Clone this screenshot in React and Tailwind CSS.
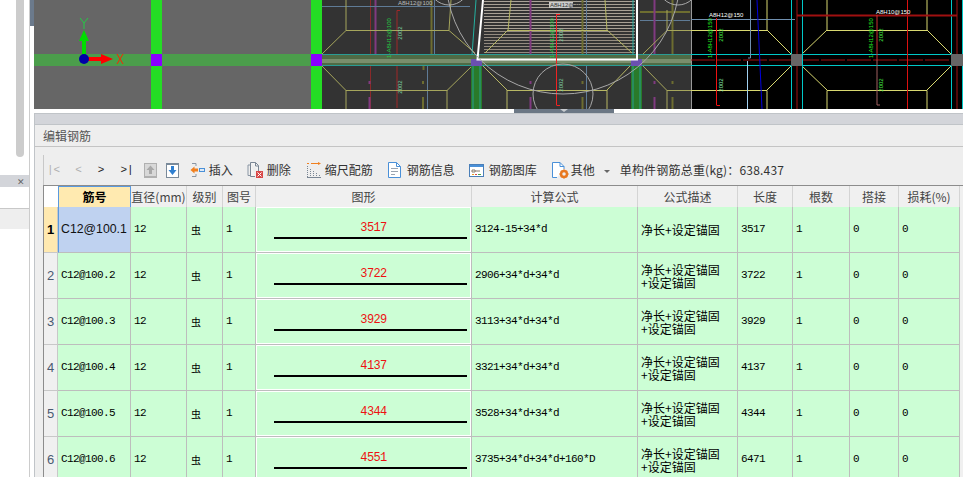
const SANS = '"Noto Sans CJK SC","Liberation Sans",sans-serif';
const MONO = '"Liberation Mono","Noto Sans CJK SC",monospace';

function L({ d, c, w = 1 }) {
  return <path d={d} stroke={c} strokeWidth={w} fill="none" />;
}
function VText({ x, y, t, c = "#22cc44", s = 6 }) {
  return (
    <text x={x} y={y} fill={c} fontSize={s} fontFamily='"Liberation Sans",sans-serif' transform={`rotate(-90 ${x} ${y})`} textAnchor="middle">
      {t}
    </text>
  );
}
function Canvas() {
  const hatch = [];
  for (let y = 1; y < 53; y += 3) hatch.push(<L key={y} d={`M484 ${y + 0.5}H635`} c={y < 30 ? "#a8a196" : "#948b80"} />);
  return (
    <svg width="929" height="109" viewBox="34 0 929 109" className="block">
      <rect x="34" y="0" width="288" height="109" fill="#666666" />
      <rect x="322" y="0" width="369" height="109" fill="#333333" />
      <rect x="691" y="0" width="272" height="109" fill="#000000" />

      <rect x="34" y="54" width="288" height="12" fill="#4b9d4b" />
      <rect x="151" y="0" width="11" height="109" fill="#24dd24" />
      <rect x="311" y="0" width="11" height="109" fill="#24dd24" />
      <rect x="151" y="54" width="11" height="12" fill="#8a00ff" />
      <rect x="311" y="54" width="11" height="12" fill="#8a00ff" />

      <rect x="82" y="40" width="4" height="16" fill="#00dd00" />
      <path d="M84 30L89 41H79Z" fill="#00dd00" />
      <rect x="88" y="57" width="14" height="4" fill="#ff0000" />
      <path d="M113 59L101 54V64Z" fill="#ff0000" />
      <circle cx="84" cy="59" r="5" fill="#0000a8" />
      <L d="M80 18L84 23L88 18M84 23V29" c="#22cc44" />
      <L d="M117 54L123 64M123 54L117 64" c="#ff2200" />

      <L d="M370.5 0V109" c="#8a2a2a" />
      <L d="M375.5 0V58M369.5 81V84M369.5 97V109" c="#803a80" w="2" />
      <L d="M431.5 0V58M423.5 61V70M423 81V84M423 97V109" c="#6d6d30" w="2" />
      <L d="M434.5 0V58M427.5 65V109" c="#5f7b96" />
      <L d="M322 6.5H470M640 20.5H690" c="#5f7b96" />
      <L d="M640 12H690" c="#6d6d30" w="2" />
      <L d="M400 10.5H397V108" c="#a02828" />

      <g>{hatch}</g>
      <L d="M530.5 0V58M530.5 81V84M530.5 97V109M654.5 0V58M654.5 81V84M654.5 97V109" c="#803a80" w="2" />
      <L d="M582.5 0V58M582.5 81V84M582.5 97V109M672.5 0V58M672.5 81V84M672.5 97V109" c="#6d6d30" w="2" />
      <L d="M586.5 0V109" c="#5f7b96" />
      <rect x="482" y="55" width="151" height="4" fill="#0a7a0a" />

      <L d="M322 54L346 30.5H449L475 53M346 0V30M449 30L451 0M322 66L346 90.5H447L472 66M346 90V109M447 90V109" c="#a6a65c" />
      <L d="M507 90.5H607M507 90V109M607 90V109M483 66L507 90M607 90L630 66M511 0L508 30.5H607L605 0M508 30L485 53M607 30L632 53" c="#b8b864" />
      <L d="M643 66L667 90.5H691M667 90V109M642 55L667 30.5H691M667 30V10" c="#a6a65c" />

      <rect x="322" y="54" width="369" height="12" fill="#4f6b45" />
      <rect x="322" y="59" width="369" height="4" fill="#7a8e6c" />
      <L d="M322 54.5H691M322 65.5H691" c="#2a9c94" />

      <rect x="471" y="66" width="11" height="43" fill="#2a7a2a" />
      <rect x="631" y="66" width="11" height="43" fill="#2a7a2a" />
      <L d="M473 66V109M480 66V109M633 66V109M640 66V109" c="#25a090" />
      <L d="M476 0L472 55M633 0V55" c="#25b0a0" />
      <rect x="471" y="59" width="11" height="7" fill="#6a50b0" />
      <rect x="631" y="59" width="11" height="7" fill="#6a50b0" />

      <path d="M483 0L477.500 59.500H637V0" stroke="#ffffff" strokeWidth="2" fill="none" />
      <L d="M556.500 14V105M556.500 14.500H560M556.500 105.500H560" c="#ee2222" />

      <circle cx="563" cy="-23" r="117" stroke="#a8a8a8" fill="none" />
      <circle cx="563" cy="94" r="30" stroke="#a8a8a8" fill="none" />
      <circle cx="449" cy="-15" r="20" stroke="#a8a8a8" fill="none" />
      <circle cx="678" cy="-15" r="20" stroke="#a8a8a8" fill="none" />

      <VText x={391} y={38} t="1-A8H12@100" />
      <VText x={402} y={33} t="2002" c="#7fd0a0" />
      <VText x={402} y={87} t="2002" c="#7fd0a0" />
      <VText x={554} y={38} t="1-A8H12@100" />
      <VText x={563} y={35} t="2002" c="#7fd0a0" />
      <VText x={563} y={85} t="2002" c="#7fd0a0" />
      <text x="398" y="5" fontSize="6" fill="#bbbbbb" fontFamily='"Liberation Sans",sans-serif'>A8H12@100</text>
      <rect x="549" y="2" width="24" height="6" fill="#cccccc" />
      <text x="550" y="7" fontSize="6" fill="#333333" fontFamily='"Liberation Sans",sans-serif'>A8H12@100</text>

      <L d="M691.500 0V109" c="#999999" />
      <L d="M691 54.500H963M691 65.500H963" c="#00c8c8" />
      <path d="M691 60H963" stroke="#a01010" strokeDasharray="24 2" fill="none" />
      <L d="M691 30.500H767V0M767 30L791 54M691 90.500H767V109M767 90L791 66" c="#d8d870" />
      <L d="M827 0V30.500H927V0M827 30L802 54M927 30L951 54M827 109V90.500H927V109M827 90L802 66M927 90L951 66" c="#d8d870" />
      <L d="M791.500 0V109M802.500 0V109M951.500 0V109M962.500 0V109" c="#00c8c8" />
      <L d="M797 0V109M957 0V109" c="#a01010" />
      <L d="M907.500 0V109" c="#dd1010" />
      <L d="M797 15.500H957" c="#a01010" w="2" />
      <L d="M691 19.500H795M750.500 0V58H748" c="#7090b0" />
      <L d="M747.500 61V109" c="#a0d0f0" />
      <L d="M757 0L762 109" c="#0000e0" />
      <L d="M716.500 18V105M716.500 105.500H720" c="#ee1111" />
      <L d="M877 15V60" c="#cc3030" />
      <L d="M877 60V105H880" c="#a06060" />
      <rect x="791" y="54" width="11" height="12" fill="#666666" />
      <rect x="951" y="54" width="12" height="12" fill="#666666" />
      <VText x={712} y={38} t="1-A8H12@150" c="#22ee22" />
      <VText x={723} y={35} t="2002" c="#44ee44" />
      <VText x={723} y={85} t="2002" c="#88eeaa" />
      <VText x={873} y={38} t="1-A8H12@150" c="#22ee22" />
      <VText x={883} y={35} t="2002" c="#44ee44" />
      <VText x={883} y={85} t="2002" c="#44ee44" />
      <text x="709" y="17" fontSize="6" fill="#ffffff" fontFamily='"Liberation Sans",sans-serif'>A8H12@150</text>
      <text x="876" y="14" fontSize="6" fill="#ffffff" fontFamily='"Liberation Sans",sans-serif'>A8H10@150</text>
    </svg>
  );
}

const UpIcon = () => (
  <svg width="13" height="15" viewBox="0 0 13 15" className="block">
    <rect x="0.500" y="0.500" width="12" height="14" fill="#d8d8d8" stroke="#b0b0b0" />
    <path d="M6.500 2.500L10.500 7H8V11H5V7H2.500Z" fill="#a8a8a8" />
    <path d="M1 13.500H12" stroke="#b0b0b0" />
  </svg>
);
const DownIcon = () => (
  <svg width="13" height="15" viewBox="0 0 13 15" className="block">
    <rect x="0.500" y="0.500" width="12" height="14" fill="#ffffff" stroke="#7a8a9a" />
    <path d="M6.500 12L10.500 7H8V3H5V7H2.500Z" fill="#2f7fd0" />
    <path d="M1 1.500H12" stroke="#7a8a9a" />
  </svg>
);
const InsertIcon = () => (
  <svg width="15" height="16" viewBox="0 0 15 16" className="block">
    <path d="M2 1.500H6M6 1.500V4M2 14.500H6M6 12V14.500" stroke="#8a96a4" fill="none" />
    <path d="M0.500 8L4.500 4.500V6.500H8V9.500H4.500V11.500Z" fill="#f08020" />
    <rect x="9.500" y="6.500" width="5" height="3" fill="#dfeaf6" stroke="#4a90d8" />
  </svg>
);
const DeleteIcon = () => (
  <svg width="16" height="16" viewBox="0 0 16 16" className="block">
    <path d="M3.500 13.500H1V3H3.500" stroke="#8a96a4" fill="none" />
    <path d="M3.500 0.500H8.500L11.500 3.500V9M8 14.500H3.500V0.500" stroke="#7a8694" fill="#f4f4f4" />
    <path d="M8.500 0.500V4H11.500" stroke="#7a8694" fill="none" />
    <rect x="9" y="9" width="7" height="7" fill="#d84848" />
    <path d="M10.500 10.500L14.500 14.500M14.500 10.500L10.500 14.500" stroke="#fff" />
  </svg>
);
const ScaleIcon = () => (
  <svg width="14" height="16" viewBox="0 0 14 16" className="block">
    <path d="M0 1.500H2M4 1.500H11" stroke="#f08020" />
    <path d="M11 0L14 1.500L11 3Z" fill="#f08020" />
    <path d="M0.500 4V15M3.500 7V15M6.500 9V15M9.500 11V15M12.500 13V15" stroke="#7a8694" strokeDasharray="1 1" />
    <path d="M0 15.500H14" stroke="#7a8694" />
  </svg>
);
const InfoIcon = () => (
  <svg width="13" height="16" viewBox="0 0 13 16" className="block">
    <path d="M0.500 0.500H8.500L12.500 4.500V15.500H0.500Z" stroke="#4a90d8" fill="#fff" />
    <path d="M8.500 0.500V4.500H12.500" stroke="#4a90d8" fill="none" />
    <path d="M3 6.500H10M3 9.500H10M3 12.500H7" stroke="#9aa4b0" />
  </svg>
);
const LibIcon = () => (
  <svg width="15" height="13" viewBox="0 0 15 13" className="block">
    <rect x="0.500" y="0.500" width="14" height="12" fill="#fff" stroke="#4a7fb8" />
    <rect x="1" y="1" width="13" height="2" fill="#4a90d8" />
    <path d="M3 6H6V8H3ZM6 7H11" stroke="#8a7a6a" fill="none" />
    <path d="M3 10.500H5" stroke="#e8a020" />
    <path d="M6 10.500H8" stroke="#d84848" />
    <path d="M9 10.500H12" stroke="#48a848" />
  </svg>
);
const OtherIcon = () => (
  <svg width="17" height="17" viewBox="0 0 17 17" className="block">
    <path d="M5 15.500H0.500V0.500H8L12 4.500V7" stroke="#4a90d8" fill="#fff" />
    <path d="M8 0.500V4.500H12" stroke="#4a90d8" fill="none" />
    <circle cx="12" cy="12" r="3" stroke="#e87820" strokeWidth="2.500" fill="none" />
    <path d="M12 7.500V9M12 15V16.500M7.500 12H9M15 12H16.500M8.800 8.800L10 10M14 14L15.200 15.200M15.200 8.800L14 10M10 14L8.800 15.200" stroke="#e87820" strokeWidth="1.500" />
  </svg>
);

const COLS = "grid grid-cols-[14px_73px_56px_36px_33px_216px_166px_100px_55px_57px_49px_61px_1fr]";
const HEAD = ["图形", "计算公式", "公式描述", "长度", "根数", "搭接", "损耗(%)"];
const ROWS = [
  ["C12@100.1", "3517", "3124-15+34*d", "3517"],
  ["C12@100.2", "3722", "2906+34*d+34*d", "3722"],
  ["C12@100.3", "3929", "3113+34*d+34*d", "3929"],
  ["C12@100.4", "4137", "3321+34*d+34*d", "4137"],
  ["C12@100.5", "4344", "3528+34*d+34*d", "4344"],
  ["C12@100.6", "4551", "3735+34*d+34*d+160*D", "6471"],
];
const hcell = "flex items-center justify-center border-r border-[#d4d4d4] bg-[#f0f0f0] text-[12px] text-[#444]";
const cell = "flex items-center border-r border-b border-[#bdbdbd] bg-[#ccfed5] pb-[1px] pl-[3px] text-[11px] tracking-[-0.600px] text-black";
const descCell = "flex items-center border-r border-b border-[#bdbdbd] bg-[#ccfed5] pl-[3px] text-[12px] leading-[13px] text-black";

function Row({ r, i }) {
  const first = i === 0;
  return (
    <div className={`${COLS} h-[46px]`} style={{ fontFamily: MONO }}>
      <div className={`flex items-center justify-center border-r border-b border-[#c8c8c8] text-[13px] ${first ? "bg-[#ffe9b0] font-bold text-black" : "bg-[#f0f0f0] text-[#4a5a70]"}`} style={{ fontFamily: '"Liberation Sans",sans-serif' }}>
        {i + 1}
      </div>
      {first ? (
        <div className="flex items-center border-r border-b border-l border-[#bdbdbd] border-l-[#5a9ae0] bg-[#bfd2f0] pl-[2px] text-[12.300px] text-[#111]" style={{ fontFamily: '"Liberation Sans",sans-serif' }}>
          {r[0]}
        </div>
      ) : (
        <div className={cell}>{r[0]}</div>
      )}
      <div className={cell}>12</div>
      <div className={cell}>
        <span className="pl-[1px] text-[10px] tracking-normal" style={{ fontFamily: SANS }}>虫</span>
      </div>
      <div className={cell}>1</div>
      <div className="flex flex-col items-center border-r border-b border-[#bdbdbd] bg-[#ccfed5] shadow-[inset_0_0_0_1px_#ffffff]">
        <span className="mt-[15px] h-[12px] pl-[20px] text-[12px] leading-[12px] tracking-[-0.600px] text-[#ee1111]">{r[1]}</span>
        <div className="mt-[3px] ml-[14px] h-[2px] w-[193px] bg-black" />
      </div>
      <div className={cell}>{r[2]}</div>
      <div className={descCell} style={{ fontFamily: SANS }}>
        {first ? "净长+设定锚固" : <span>净长+设定锚固<br />+设定锚固</span>}
      </div>
      <div className={cell}>{r[3]}</div>
      <div className={cell}>1</div>
      <div className={cell}>0</div>
      <div className={cell}>0</div>
      <div className="bg-[#f0f0f0]" />
    </div>
  );
}

function Tool({ ml, icon, label, gap }) {
  return (
    <div className={`flex items-center ${ml} ${gap}`}>
      {icon}
      <span className="text-[12px] text-[#333]">{label}</span>
    </div>
  );
}

export default function App() {
  return (
    <div className="flex h-[477px] w-[963px] overflow-hidden bg-white" style={{ fontFamily: SANS }}>
      <div className="w-[30px] shrink-0 border-r border-[#cccccc]">
        <div className="ml-[16px] h-[157px] w-[8px] rounded-b-[4px] bg-[#cccccc]" />
        <div className="mt-[18px] flex h-[12px] items-center justify-end bg-[#d3d5da] pr-[4px] text-[9px] leading-none text-[#666]">✕</div>
        <div className="h-[21px]" />
        <div className="h-[21px] border-t border-[#c8c8c8] bg-[#eeeeee]" />
      </div>
      <div className="w-[4px] shrink-0">
        <div className="h-[26px] bg-[#6b7a8c]" />
      </div>
      <div className="flex min-w-0 flex-1 flex-col">
        <Canvas />
        <div className="h-[4px] shrink-0">
          <div className="relative ml-[480px] h-[4px] w-[100px] bg-[#6b7785]">
            <div className="absolute top-0 left-[46px] h-0 w-0 border-t-[3px] border-r-[4px] border-l-[4px] border-t-[#c8ccd0] border-r-transparent border-l-transparent" />
          </div>
        </div>
        <div className="flex min-h-0 flex-1 flex-col border-l border-[#c0c4c8] bg-[#eeeeee]">
          <div className="h-[12px] shrink-0 border-y border-[#c0c4c8] bg-[#d3d5da]" />
          <div className="flex h-[22px] shrink-0 items-center border-b border-[#c4c4c4] pl-[8px] text-[12px] text-[#555]">编辑钢筋</div>
          <div className="flex min-h-0 flex-1 flex-col pt-[8px] pl-[8px]">
            <div className="flex h-[30px] shrink-0 items-center border-l border-[#c8c8c8] whitespace-nowrap">
              <span className="ml-[3px] text-[11px] text-[#b0b0b0]" style={{ fontFamily: MONO }}>|&lt;</span>
              <span className="ml-[15px] text-[11px] text-[#b0b0b0]" style={{ fontFamily: MONO }}>&lt;</span>
              <span className="ml-[16px] text-[11px] text-[#222]" style={{ fontFamily: MONO }}>&gt;</span>
              <span className="ml-[16px] text-[11px] text-[#222]" style={{ fontFamily: MONO }}>&gt;|</span>
              <div className="ml-[10px]"><UpIcon /></div>
              <div className="ml-[9px]"><DownIcon /></div>
              <Tool ml="ml-[11px]" gap="gap-[4px]" icon={<InsertIcon />} label="插入" />
              <Tool ml="ml-[14px]" gap="gap-[4px]" icon={<DeleteIcon />} label="删除" />
              <Tool ml="ml-[16px]" gap="gap-[4px]" icon={<ScaleIcon />} label="缩尺配筋" />
              <Tool ml="ml-[15px]" gap="gap-[6px]" icon={<InfoIcon />} label="钢筋信息" />
              <Tool ml="ml-[14px]" gap="gap-[5px]" icon={<LibIcon />} label="钢筋图库" />
              <Tool ml="ml-[15px]" gap="gap-[2px]" icon={<OtherIcon />} label="其他" />
              <div className="mt-[2px] ml-[9px] h-0 w-0 border-t-[3px] border-r-[3px] border-l-[3px] border-t-[#666] border-r-transparent border-l-transparent" />
              <span className="ml-[10px] text-[12px] tracking-[0.200px] text-[#333]">单构件钢筋总重(kg)：638.437</span>
            </div>
            <div className="min-h-0 flex-1 overflow-hidden border-t border-l border-t-[#8c8c8c] border-l-[#8c8c8c] bg-[#f0f0f0]">
              <div className={`${COLS} h-[21px]`}>
                <div className="bg-white" />
                <div className="flex items-center justify-center border-r border-l border-t border-[#5a9ae0] bg-[#ffeab0] text-[12px] font-bold text-black">筋号</div>
                <div className={hcell}>直径(mm)</div>
                <div className={hcell}>级别</div>
                <div className={hcell}>图号</div>
                {HEAD.map((h) => (
                  <div key={h} className={hcell}>{h}</div>
                ))}
                <div className="bg-[#f0f0f0]" />
              </div>
              {ROWS.map((r, i) => (
                <Row key={r[0]} r={r} i={i} />
              ))}
            </div>
          </div>
        </div>
      </div>
    </div>
  );
}
